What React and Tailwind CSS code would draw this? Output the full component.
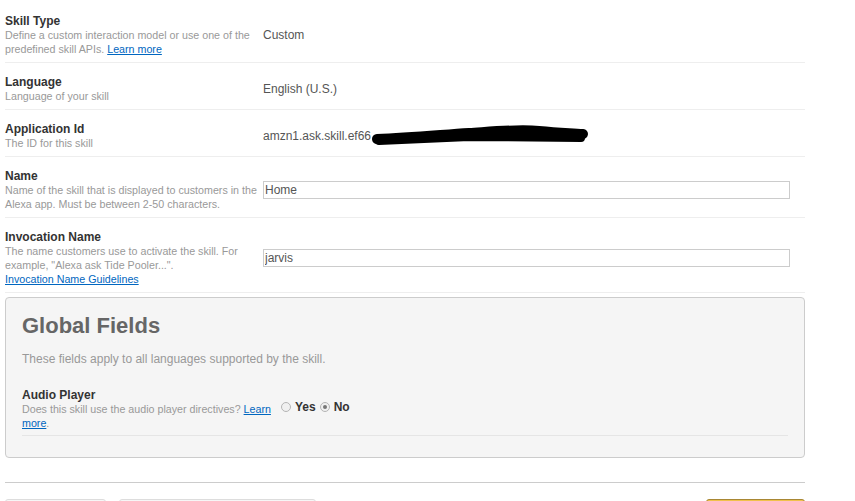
import { useState } from 'react';

const rows = [
  { id: 'lang', title: 'Language', desc: 'Language of your skill', kind: 'text', value: 'English (U.S.)' },
  { id: 'appid', title: 'Application Id', desc: 'The ID for this skill', kind: 'id', value: 'amzn1.ask.skill.ef66' },
  {
    id: 'name',
    title: 'Name',
    desc: 'Name of the skill that is displayed to customers in the Alexa app. Must be between 2-50 characters.',
    kind: 'input',
  },
];

function Radio({ checked }) {
  return (
    <span className="inline-flex w-[10px] h-[10px] rounded-full border border-[#b5b5b5] bg-[#f0f0f0] items-center justify-center">
      {checked && <span className="w-[4px] h-[4px] rounded-full bg-[#777]" />}
    </span>
  );
}

export default function App() {
  const [name, setName] = useState('Home');
  const [invocation, setInvocation] = useState('jarvis');
  const [audio, setAudio] = useState('no');

  return (
    <div className="w-[855px] h-[501px] overflow-hidden bg-white font-['Liberation_Sans',Arial,sans-serif]">
      <div className="w-[800px] ml-[5px] pt-[14px]">
        {/* Skill info rows */}
        <div className="grid grid-cols-[258px_1fr] items-center pb-[6px] border-b border-[#eee]">
          <div className="pr-[4px]">
            <div className="text-[12px] leading-[14px] font-bold text-[#333]">Skill Type</div>
            <div className="text-[10.7px] leading-[14px] text-[#999]">
              Define a custom interaction model or use one of the predefined skill APIs.{' '}
              <a href="#" className="text-[#0066c0] underline">Learn more</a>
            </div>
          </div>
          <div className="text-[12px] text-[#555]">Custom</div>
        </div>

        {rows.map((row) => (
          <div
            key={row.id}
            className="grid grid-cols-[258px_1fr] items-center pt-[12px] pb-[6px] border-b border-[#eee]"
          >
            <div className="pr-[2px]">
              <div className="text-[12px] leading-[14px] font-bold text-[#333]">{row.title}</div>
              <div className="text-[10.7px] leading-[14px] text-[#999]">{row.desc}</div>
            </div>
            {row.kind === 'text' && <div className="text-[12px] text-[#555]">{row.value}</div>}
            {row.kind === 'id' && (
              <div className="relative text-[12px] text-[#555]">
                {row.value}
                <svg
                  className="absolute left-[106px] top-1/2 -translate-y-1/2"
                  width="222"
                  height="24"
                  viewBox="0 0 222 24"
                >
                  <path
                    d="M8 15 C40 14 70 11 100 9 S150 5 170 7 S200 9 214 10"
                    fill="none"
                    stroke="#000"
                    strokeWidth="10"
                    strokeLinecap="round"
                  />
                  <path
                    d="M10 17 L100 13 L212 14"
                    fill="none"
                    stroke="#000"
                    strokeWidth="8"
                    strokeLinecap="round"
                  />
                </svg>
              </div>
            )}
            {row.kind === 'input' && (
              <input
                value={name}
                onChange={(e) => setName(e.target.value)}
                className="w-[527px] h-[18px] border border-[#ccc] px-[1px] text-[12px] text-[#555] outline-none"
              />
            )}
          </div>
        ))}

        <div className="grid grid-cols-[258px_1fr] items-center pt-[12px] pb-[6px] border-b border-[#eee]">
          <div className="pr-[16px]">
            <div className="text-[12px] leading-[14px] font-bold text-[#333]">Invocation Name</div>
            <div className="text-[10.7px] leading-[14px] text-[#999]">
              The name customers use to activate the skill. For example, "Alexa ask Tide Pooler...".
            </div>
            <a href="#" className="block text-[10.7px] leading-[14px] text-[#0066c0] underline">
              Invocation Name Guidelines
            </a>
          </div>
          <input
            value={invocation}
            onChange={(e) => setInvocation(e.target.value)}
            className="w-[527px] h-[18px] border border-[#ccc] px-[1px] text-[12px] text-[#555] outline-none"
          />
        </div>

        {/* Global Fields */}
        <div className="mt-[4px] h-[161px] bg-[#f5f5f5] border border-[#ccc] rounded-[4px] px-[16px] pt-[16px]">
          <h2 className="text-[22px] leading-[24px] font-bold text-[#666]">Global Fields</h2>
          <p className="mt-[14px] text-[12px] leading-[14px] text-[#999]">
            These fields apply to all languages supported by the skill.
          </p>
          <div className="mt-[22px] flex items-center pb-[5px] border-b border-[#e5e5e5]">
            <div className="w-[254px]">
              <div className="text-[12px] leading-[14px] font-bold text-[#333]">Audio Player</div>
              <div className="text-[10.7px] leading-[14px] text-[#999]">
                Does this skill use the audio player directives?{' '}
                <a href="#" className="text-[#0066c0] underline">Learn more</a>.
              </div>
            </div>
            <div className="flex items-center gap-[4px] ml-[5px] -mt-[5px] text-[12px] font-bold text-[#333]">
              <label className="flex items-center gap-[4px] cursor-pointer" onClick={() => setAudio('yes')}>
                <Radio checked={audio === 'yes'} />
                Yes
              </label>
              <label className="flex items-center gap-[4px] cursor-pointer" onClick={() => setAudio('no')}>
                <Radio checked={audio === 'no'} />
                No
              </label>
            </div>
          </div>
        </div>

        <div className="mt-[24px] border-t border-[#ccc]" />

        {/* Footer buttons */}
        <div className="mt-[16px] flex items-start">
          <button className="w-[101px] h-[30px] rounded-[3px] border border-[#ddd] bg-[#f6f6f6]" />
          <button className="ml-[13px] w-[197px] h-[30px] rounded-[3px] border border-[#ddd] bg-[#f6f6f6]" />
          <button className="ml-auto w-[99px] h-[30px] rounded-[3px] border border-[#a88734] bg-[#f0c14b]" />
        </div>
      </div>
    </div>
  );
}
